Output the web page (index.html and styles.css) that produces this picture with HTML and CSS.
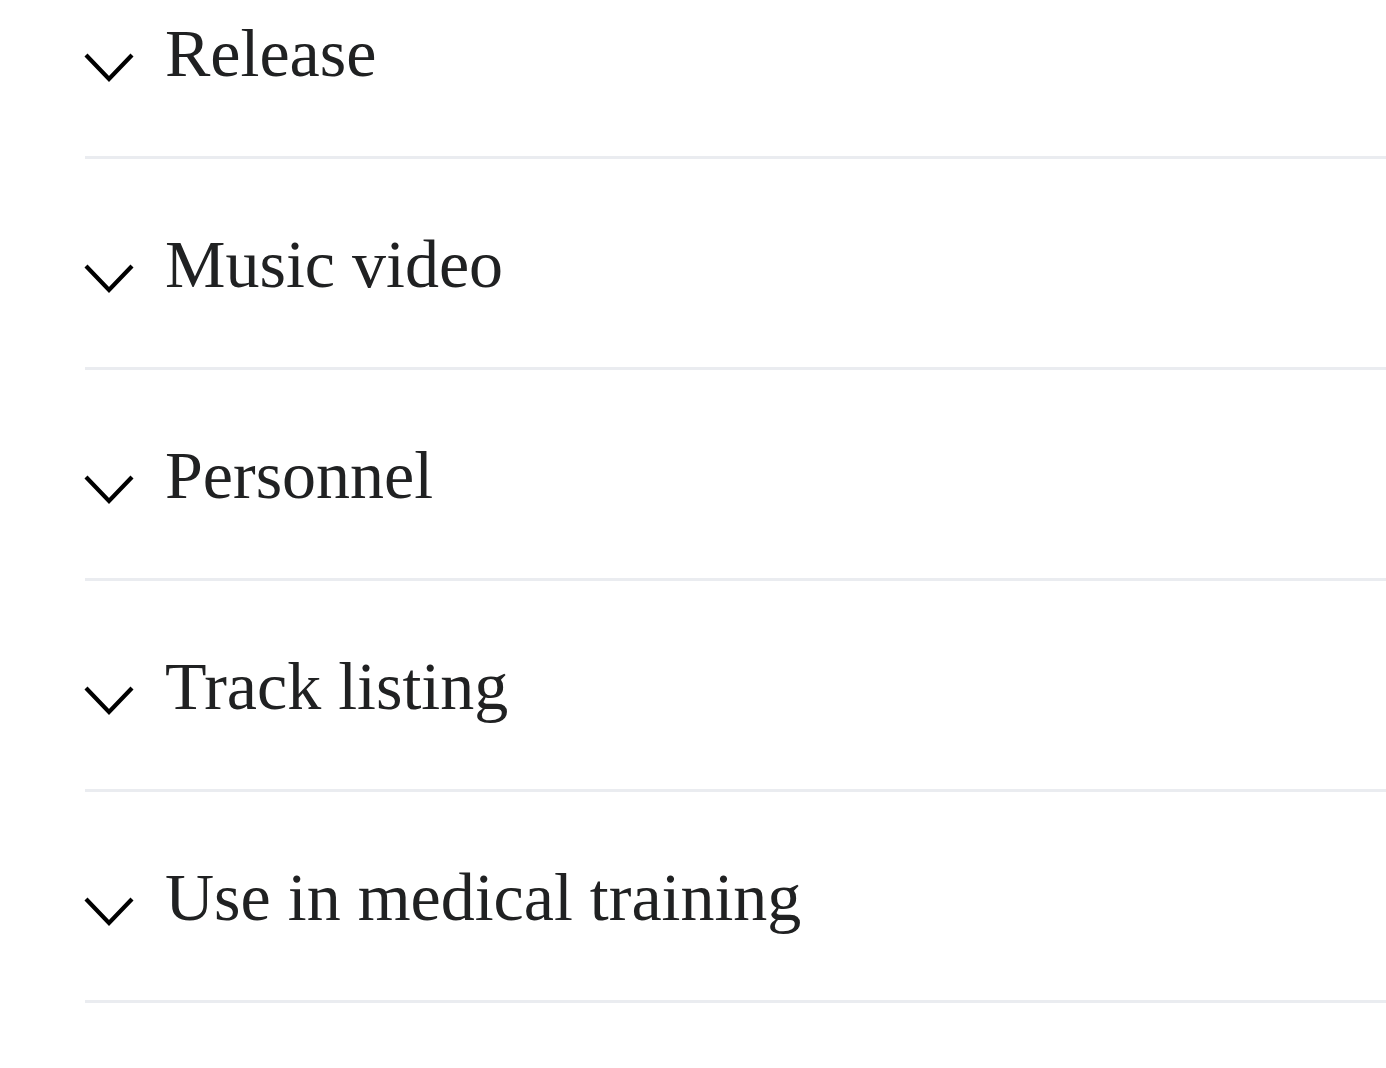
FILE: index.html
```html
<!DOCTYPE html>
<html lang="en">
<head>
    <meta charset="UTF-8">
    <meta name="viewport" content="width=device-width, initial-scale=1.0">
    <title>Sections</title>
    <link rel="stylesheet" href="styles.css">
</head>
<body>
    <div class="sections">
        <div class="section-heading">
            <svg class="chevron" width="50" height="32" viewBox="0 0 50 32"><polyline points="2,3 25,27 48,3"/></svg>
            <h2>Release</h2>
        </div>
        <div class="section-heading">
            <svg class="chevron" width="50" height="32" viewBox="0 0 50 32"><polyline points="2,3 25,27 48,3"/></svg>
            <h2>Music video</h2>
        </div>
        <div class="section-heading">
            <svg class="chevron" width="50" height="32" viewBox="0 0 50 32"><polyline points="2,3 25,27 48,3"/></svg>
            <h2>Personnel</h2>
        </div>
        <div class="section-heading">
            <svg class="chevron" width="50" height="32" viewBox="0 0 50 32"><polyline points="2,3 25,27 48,3"/></svg>
            <h2>Track listing</h2>
        </div>
        <div class="section-heading">
            <svg class="chevron" width="50" height="32" viewBox="0 0 50 32"><polyline points="2,3 25,27 48,3"/></svg>
            <h2>Use in medical training</h2>
        </div>
    </div>
</body>
</html>
```

FILE: styles.css
```css
body {
    margin: 0;
    padding: 0;
    background: #fff;
    font-family: "Liberation Serif", "DejaVu Serif", serif;
    color: #202122;
}
.sections {
    padding-left: 85px;
}
.section-heading {
    display: flex;
    align-items: flex-start;
    padding: 71px 0 69px;
    border-bottom: 3px solid #eaecf0;
}
.section-heading:first-child {
    padding-top: 19px;
}
.chevron {
    flex: none;
    margin: 33px 0 0 -1px;
}
.chevron polyline {
    fill: none;
    stroke: #000;
    stroke-width: 4.2;
}
.section-heading h2 {
    margin: 0 0 0 31px;
    font-size: 68px;
    font-weight: normal;
    line-height: 68px;
}
```
